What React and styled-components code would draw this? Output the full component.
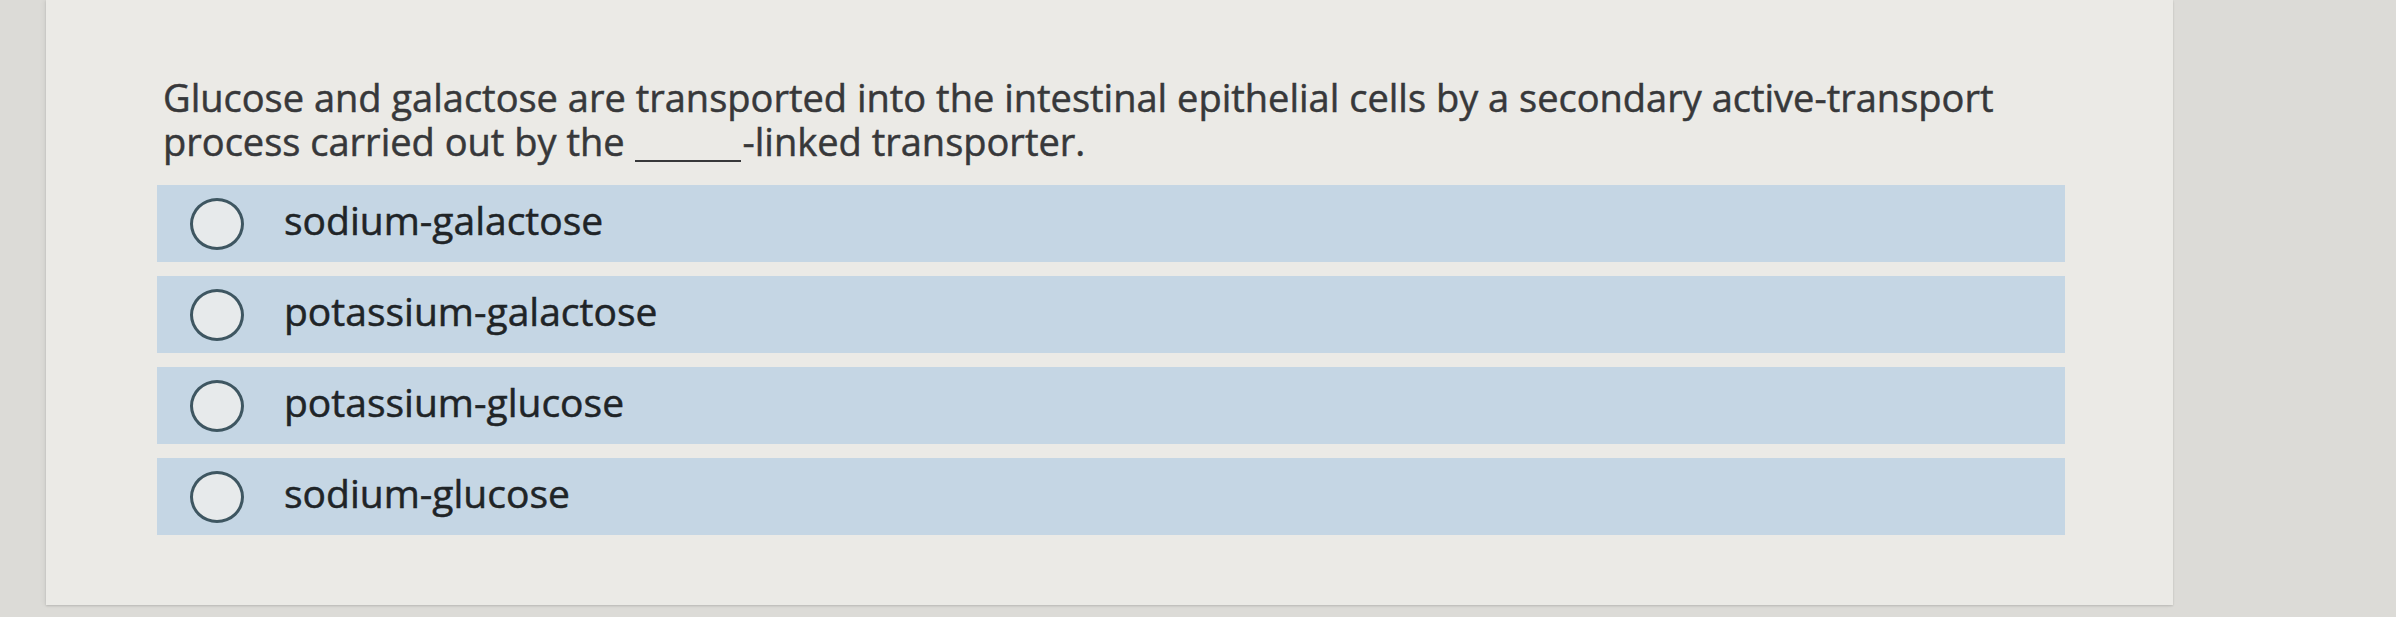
import React from 'react'
import styled, { createGlobalStyle } from 'styled-components'

const ROW_BLUE = '#c5d6e4'
const CARD_BG = '#ebeae6'
const OUTER_BG = '#dcdbd7'

const GlobalStyle = createGlobalStyle`
  html, body {
    margin: 0;
    padding: 0;
    background: ${OUTER_BG};
  }
  body {
    font-family: "Open Sans", Lato, sans-serif;
  }
`

const Page = styled.main`
  width: 2396px;
  height: 617px;
  padding-left: 46px;
  box-sizing: border-box;
  overflow: hidden;
`

const Card = styled.section`
  width: 2127px;
  height: 605px;
  box-sizing: border-box;
  background: ${CARD_BG};
  padding: 75px 108px 0 111px;
  box-shadow: 0 1px 2px rgba(0, 0, 0, 0.14), -2px 0 5px rgba(0, 0, 0, 0.05);
`

const Question = styled.p`
  margin: 0;
  font-size: 38px;
  font-weight: 500;
  line-height: 44px;
  color: #37383a;
  padding-left: 6px;
  -webkit-text-stroke: 0.5px currentColor;
`

const Blank = styled.span`
  display: inline-block;
  width: 106px;
  height: 2px;
  margin-right: 2px;
  background: #37383a;
  vertical-align: -6px;
`

const OptionList = styled.ul`
  list-style: none;
  margin: 22px 0 0;
  padding: 0;
  display: flex;
  flex-direction: column;
  gap: 14px;
`

const Option = styled.li`
  height: 77px;
  background: ${ROW_BLUE};
  display: flex;
  align-items: center;
  padding-left: 33px;
  gap: 40px;
`

const Radio = styled.span`
  width: 54px;
  height: 52px;
  box-sizing: border-box;
  border-radius: 50%;
  border: 3px solid #3e5661;
  background: #e7eaeb;
  flex-shrink: 0;
`

const OptionLabel = styled.span`
  font-size: 39px;
  font-weight: 500;
  color: #202427;
  padding-bottom: 9px;
  -webkit-text-stroke: 0.5px currentColor;
`

const options = [
  'sodium-galactose',
  'potassium-galactose',
  'potassium-glucose',
  'sodium-glucose',
]

const App = () => (
  <Page>
    <GlobalStyle />
    <Card>
      <Question>
        Glucose and galactose are transported into the intestinal epithelial cells by a secondary active-transport
        <br />
        process carried out by the <Blank />-linked transporter.
      </Question>
      <OptionList>
        {options.map((label) => (
          <Option key={label}>
            <Radio />
            <OptionLabel>{label}</OptionLabel>
          </Option>
        ))}
      </OptionList>
    </Card>
  </Page>
)

export default App
